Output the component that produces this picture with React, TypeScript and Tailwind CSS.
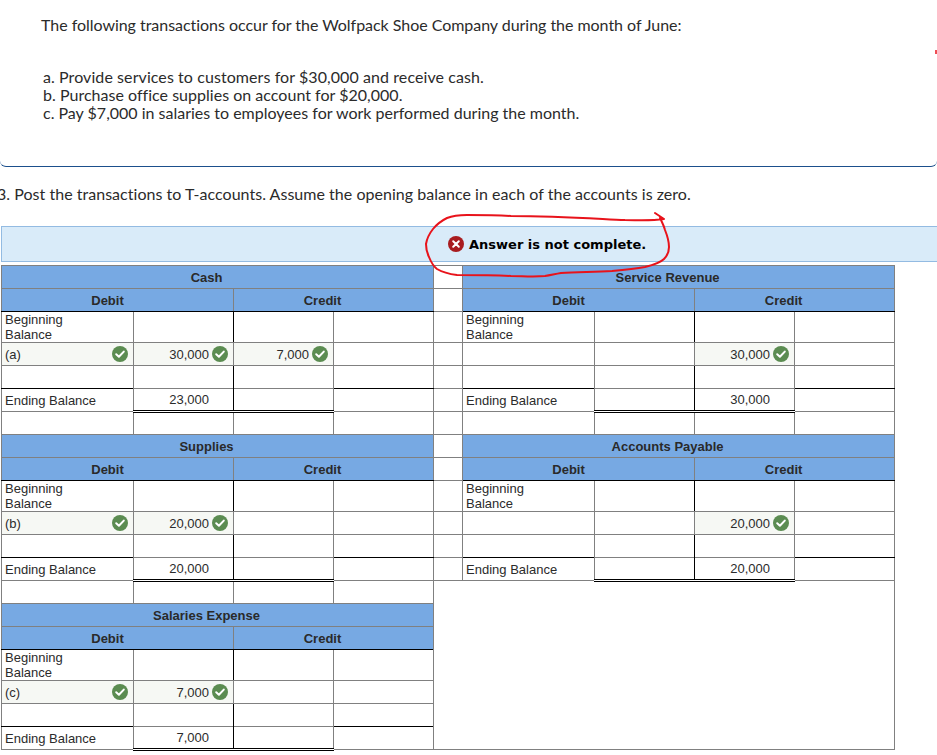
const checkIcon = (
  <svg viewBox="0 0 16 16" className="w-4 h-4 shrink-0">
    <circle cx="8" cy="8" r="8" fill="#5b8c51" />
    <path d="M4.2 8.3 L6.9 10.8 L11.8 5.6" fill="none" stroke="#fff" strokeWidth="2" strokeLinecap="round" strokeLinejoin="round" />
  </svg>
);

type Side = {
  title: string;
  debit?: { label: string; amount: string };
  credit?: string;
  endDebit?: string;
  endCredit?: string;
};

const sections: [Side, Side | null][] = [
  [
    { title: 'Cash', debit: { label: '(a)', amount: '30,000' }, credit: '7,000', endDebit: '23,000' },
    { title: 'Service Revenue', credit: '30,000', endCredit: '30,000' },
  ],
  [
    { title: 'Supplies', debit: { label: '(b)', amount: '20,000' }, endDebit: '20,000' },
    { title: 'Accounts Payable', credit: '20,000', endCredit: '20,000' },
  ],
  [{ title: 'Salaries Expense', debit: { label: '(c)', amount: '7,000' }, endDebit: '7,000' }, null],
];

function Amount({ value, checked }: { value?: string; checked?: boolean }) {
  if (!value) return null;
  return (
    <div className="flex items-center justify-end gap-[3px] pr-[5px]">
      <span>{value}</span>
      {checked ? checkIcon : <span className="w-4 h-4" />}
    </div>
  );
}

const cell = 'border border-[#808080] p-0 h-[23px]';
const tint = 'bg-[#f6f8f4]';

function Titles({ side }: { side: Side }) {
  return (
    <td colSpan={4} className={`${cell} bg-[#77a9e3] text-center pr-[22px] font-bold text-[#2a2a2a]`}>
      {side.title}
    </td>
  );
}

function Headers() {
  return (
    <>
      <td colSpan={2} className={`${cell} bg-[#77a9e3] border-b-black font-bold text-[#2a2a2a] text-center pr-[20px]`}>Debit</td>
      <td colSpan={2} className={`${cell} bg-[#77a9e3] border-b-black font-bold text-[#2a2a2a] text-center pr-[22px]`}>Credit</td>
    </>
  );
}

function BeginRow() {
  return (
    <>
      <td className={`${cell} h-[31px] pl-[3px] leading-[15px]`}>Beginning<br />Balance</td>
      <td className={`${cell} border-r-black`} />
      <td className={cell} />
      <td className={cell} />
    </>
  );
}

function EntryRow({ side }: { side: Side }) {
  const d = side.debit;
  return (
    <>
      <td className={`${cell} pl-[3px] ${d ? tint : ''}`}>
        {d && (
          <div className="flex items-center justify-between pr-[5px]">
            <span>{d.label}</span>
            {checkIcon}
          </div>
        )}
      </td>
      <td className={`${cell} ${d ? tint : ''}`}>{d && <Amount value={d.amount} checked />}</td>
      <td className={`${cell} ${side.credit ? tint : ''}`}><Amount value={side.credit} checked /></td>
      <td className={cell} />
    </>
  );
}

function BlankRow() {
  return (
    <>
      <td className={`${cell} border-b-black`} />
      <td className={`${cell} border-b-black border-r-black`} />
      <td className={`${cell} border-b-black`} />
      <td className={`${cell} border-b-black`} />
    </>
  );
}

function EndRow({ side }: { side: Side }) {
  return (
    <>
      <td className={`${cell} pl-[3px]`}>Ending Balance</td>
      <td className={`${cell} border-b-[3px] border-b-black border-double border-r-black`}><Amount value={side.endDebit} /></td>
      <td className={`${cell} border-b-[3px] border-b-black border-double`}><Amount value={side.endCredit} /></td>
      <td className={cell} />
    </>
  );
}

function Tail() {
  return (
    <>
      <td className={cell} />
      <td className={cell} />
      <td className={cell} />
      <td className={cell} />
    </>
  );
}

export default function App() {
  return (
    <div className="relative w-[937px] h-[755px] overflow-hidden bg-white text-[#2b2b2b] font-['Lato',sans-serif]">
      <div className="h-[167px] border-b border-[#1b4f8c] rounded-b-[6px] pl-[41px] pt-[16px] text-[16px] leading-[18px]">
        <p className="tracking-[-0.035px]">The following transactions occur for the Wolfpack Shoe Company during the month of June:</p>
        <div className="pl-[2px] mt-[34px]">
          <p className="tracking-[0.08px]">a. Provide services to customers for $30,000 and receive cash.</p>
          <p className="tracking-[0.02px]">b. Purchase office supplies on account for $20,000.</p>
          <p>c. Pay $7,000 in salaries to employees for work performed during the month.</p>
        </div>
      </div>

      <p className="mt-[18px] ml-[-3px] text-[16px] leading-[18px] tracking-[0.03px]">3. Post the transactions to T-accounts. Assume the opening balance in each of the accounts is zero.</p>

      <div className="ml-[1px] mt-[23px] w-[960px] h-[36px] bg-[#d9ebf9] border border-[#93bbe2] flex items-center pl-[446px] gap-[5px]">
        <svg viewBox="0 0 16 16" className="w-4 h-4 shrink-0">
          <circle cx="8" cy="8" r="8" fill="#a81c1f" />
          <path d="M5.2 5.2 L10.8 10.8 M10.8 5.2 L5.2 10.8" stroke="#fff" strokeWidth="2" strokeLinecap="round" />
        </svg>
        <span className="relative top-px font-['DejaVu_Sans',sans-serif] font-bold text-[13px] text-black">Answer is not complete.</span>
      </div>

      <table className="ml-[1px] mt-[3px] table-fixed border-collapse w-[894px] font-['Liberation_Sans',sans-serif] text-[13px] leading-[15px] text-[#2b2b2b]">
        <colgroup>
          <col className="w-[132px]" />
          <col className="w-[100px]" />
          <col className="w-[100px]" />
          <col className="w-[100px]" />
          <col className="w-[29px]" />
          <col className="w-[132px]" />
          <col className="w-[100px]" />
          <col className="w-[100px]" />
          <col className="w-[100px]" />
        </colgroup>
        <tbody>
          {sections.map(([left, right], i) => {
            // right side: spacer + account, only for the first two sections
            const sp = right ? <td className={cell} /> : null;
            return [
              <tr key={`${i}t`}><Titles side={left} />{sp}{right && <Titles side={right} />}</tr>,
              <tr key={`${i}h`}><Headers />{sp}{right && <Headers />}</tr>,
              <tr key={`${i}b`}><BeginRow />{sp}{right && <BeginRow />}</tr>,
              <tr key={`${i}e`}><EntryRow side={left} />{sp}{right && <EntryRow side={right} />}</tr>,
              <tr key={`${i}k`}><BlankRow />{sp}{right && <BlankRow />}</tr>,
              <tr key={`${i}d`}><EndRow side={left} />{sp}{right && <EndRow side={right} />}</tr>,
              i === 0 && <tr key={`${i}z`}><Tail />{sp}<Tail /></tr>,
              i === 1 && <tr key={`${i}z`}><Tail /><td colSpan={5} rowSpan={7} className="border border-[#808080] p-0" /></tr>,
            ];
          })}
        </tbody>
      </table>

      <svg className="absolute left-0 top-0 pointer-events-none" width="937" height="300" viewBox="0 0 937 300" fill="none">
        <path
          d="M655 213 L664 219 C650 221 638 220 625 220 C600 219 560 216 511 216 C495 215 480 215 467 215 C458 215 452 216 447 218 C441 221 437 224 433 229 C429 234 427 238 426 244 C426 249 427 253 429 257 C431 262 433 266 437 269 C442 272 449 274 457 275 C475 275 492 275 511 276 C522 276 533 277 545 276 C551 275 555 274 561 273 C578 272 595 272 612 271 C623 270 634 269 645 267 C653 265 660 263 664 259 C667 256 669 252 669 247 C669 241 667 235 665 230 C664 226 662 222 660 218"
          stroke="#e8131b"
          strokeWidth="2"
          strokeLinecap="round"
          strokeLinejoin="round"
        />
        <path d="M936 50 L936 54" stroke="#e8131b" strokeWidth="1.5" />
      </svg>
    </div>
  );
}
